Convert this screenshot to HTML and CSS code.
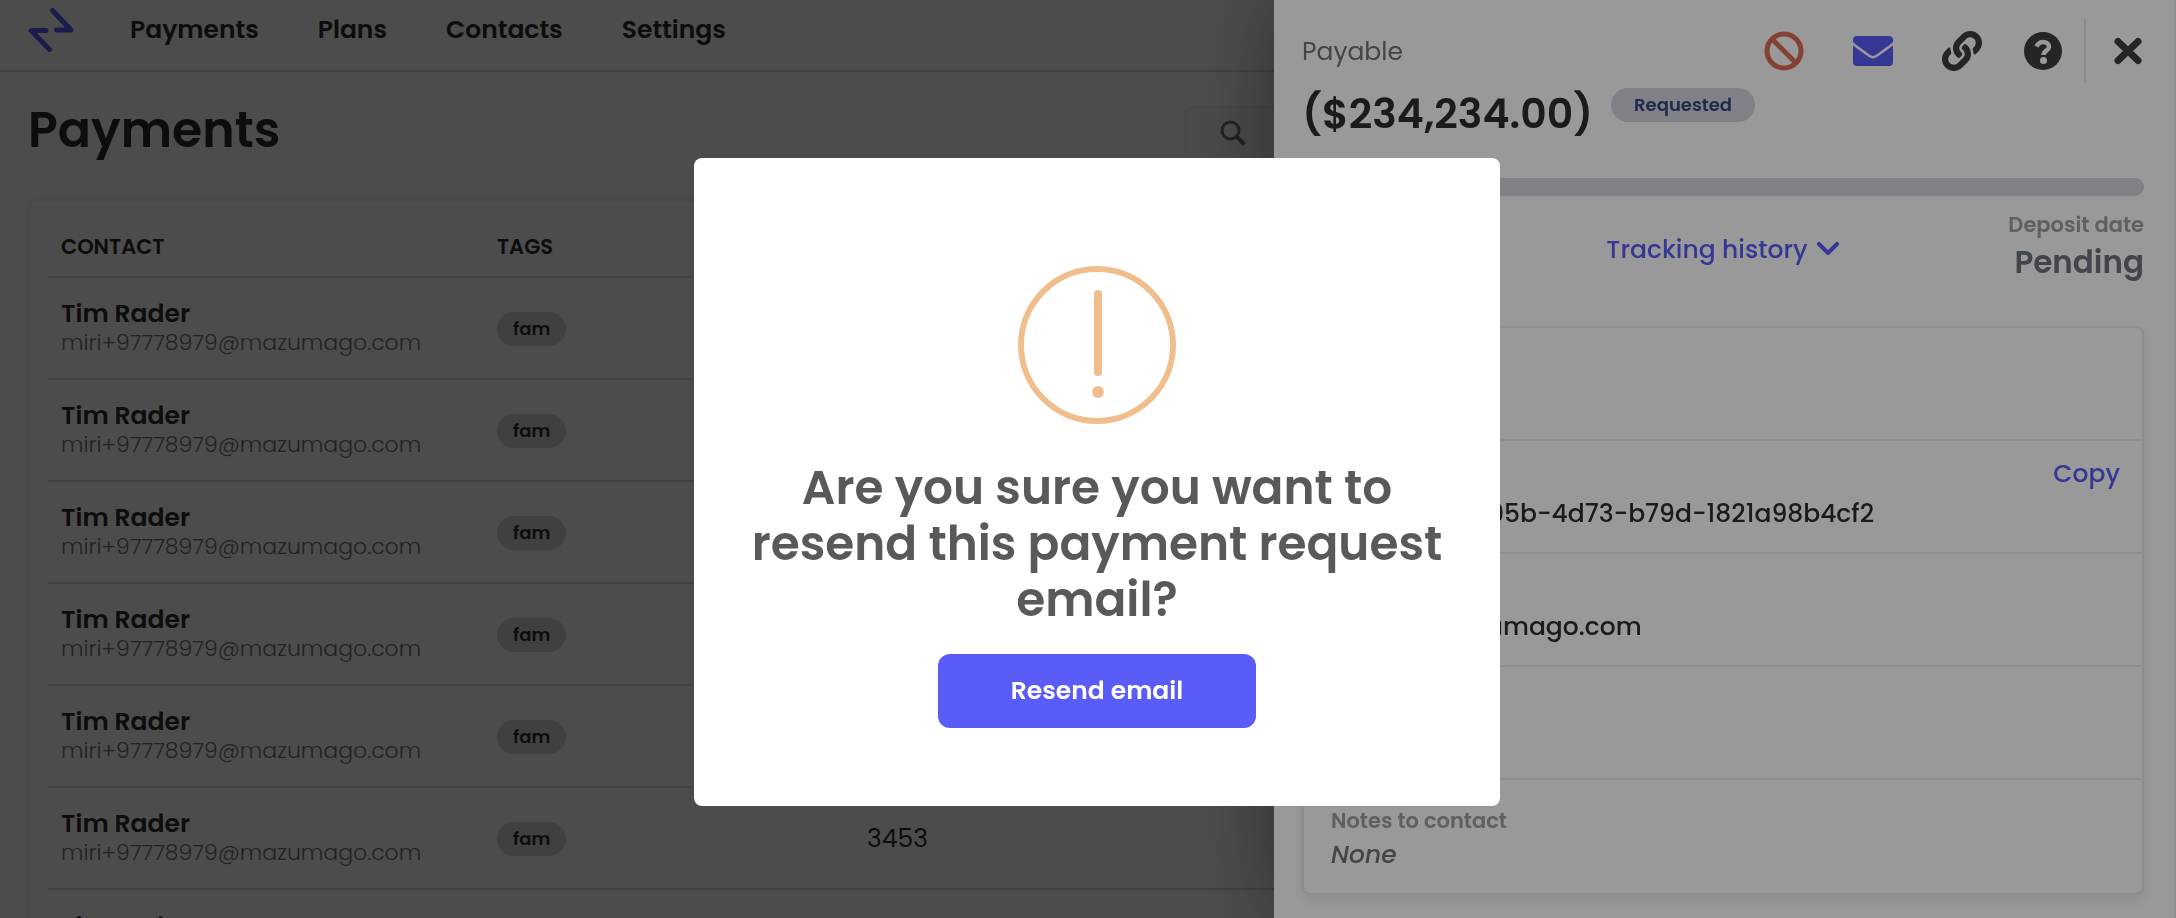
FILE: index.html
```html
<!DOCTYPE html>
<html lang="en">
<head>
    <meta charset="UTF-8" />
    <meta name="viewport" content="width=device-width, initial-scale=1.0"/>
    <title>Payments</title>
    <link rel="stylesheet" href="styles.css">
</head>
<body>
<header class="navbar">
    <a href="#" class="logo" aria-label="Home">
        <svg width="46" height="44" viewBox="0 0 46 44" fill="none" stroke="currentColor" stroke-width="5" stroke-linecap="round" stroke-linejoin="round">
            <path d="M24.500 2.500 L43 22 H28.500" />
            <path d="M21.500 41.500 L3 22.500 H18" />
        </svg>
    </a>
    <nav class="nav-links">
        <a href="#">Payments</a>
        <a href="#">Plans</a>
        <a href="#">Contacts</a>
        <a href="#">Settings</a>
    </nav>
</header>

<main class="page">
    <div class="page-head">
        <h1>Payments</h1>
        <button class="search" aria-label="Search">
            <svg width="26" height="26" viewBox="0 0 26 26" fill="none" stroke="currentColor" stroke-width="3">
                <circle cx="10.500" cy="10.500" r="8.500" />
                <path d="M17 17 L24.500 24.500" stroke-width="4" />
            </svg>
        </button>
    </div>

    <div class="table-card">
        <table class="payments">
            <thead>
                <tr><th class="col-contact">Contact</th><th class="col-tags">Tags</th><th></th></tr>
            </thead>
            <tbody>
                <tr><td><strong>Tim Rader</strong><span class="email">miri+97778979@mazumago.com</span></td><td><span class="tag">fam</span></td><td></td></tr>
                <tr><td><strong>Tim Rader</strong><span class="email">miri+97778979@mazumago.com</span></td><td><span class="tag">fam</span></td><td></td></tr>
                <tr><td><strong>Tim Rader</strong><span class="email">miri+97778979@mazumago.com</span></td><td><span class="tag">fam</span></td><td></td></tr>
                <tr><td><strong>Tim Rader</strong><span class="email">miri+97778979@mazumago.com</span></td><td><span class="tag">fam</span></td><td></td></tr>
                <tr><td><strong>Tim Rader</strong><span class="email">miri+97778979@mazumago.com</span></td><td><span class="tag">fam</span></td><td></td></tr>
                <tr><td><strong>Tim Rader</strong><span class="email">miri+97778979@mazumago.com</span></td><td><span class="tag">fam</span></td><td>3453</td></tr>
                <tr><td><strong>Tim Rader</strong></td><td></td><td></td></tr>
            </tbody>
        </table>
    </div>
</main>

<div class="backdrop"></div>

<!-- Payment details drawer -->
<aside class="drawer">
    <div class="drawer-top">
        <span class="kind">Payable</span>
        <div class="actions">
            <button class="icon-btn danger" aria-label="Cancel payment">
                <svg width="40" height="40" viewBox="0 0 40 40" fill="none" stroke="currentColor" stroke-width="5">
                    <circle cx="20" cy="20" r="17" />
                    <path d="M8 8 L32 32" />
                </svg>
            </button>
            <button class="icon-btn brand" aria-label="Resend email">
                <svg width="40" height="40" viewBox="0 0 512 512" fill="currentColor">
                    <path d="M502.300 190.800c3.900-3.100 9.700-.2 9.700 4.700V400c0 26.500-21.500 48-48 48H48c-26.500 0-48-21.500-48-48V195.600c0-5 5.700-7.800 9.700-4.700 22.400 17.400 52.100 39.500 154.100 113.600 21.100 15.400 56.700 47.800 92.200 47.600 35.700.3 72-32.800 92.300-47.600 102-74.100 131.600-96.300 154-113.700zM256 320c23.200.4 56.600-29.200 73.400-41.400 132.700-96.300 142.800-104.700 173.400-128.700 5.800-4.500 9.200-11.500 9.200-18.900v-19c0-26.500-21.500-48-48-48H48c-26.500 0-48 21.500-48 48v19c0 7.400 3.400 14.300 9.200 18.900 30.600 23.900 40.700 32.400 173.400 128.700 16.800 12.200 50.200 41.800 73.400 41.400z" />
                </svg>
            </button>
            <button class="icon-btn" aria-label="Copy link">
                <svg width="40" height="40" viewBox="0 0 512 512" fill="currentColor">
                    <path d="M326.612 185.391c59.747 59.809 58.927 155.698.36 214.590-.11.12-.24.25-.36.37l-67.200 67.200c-59.270 59.270-155.699 59.262-214.960 0-59.270-59.260-59.270-155.700 0-214.960l37.106-37.106c9.840-9.840 26.786-3.300 27.294 10.606.648 17.722 3.826 35.527 9.690 52.721 1.986 5.822.567 12.262-3.783 16.612l-13.087 13.087c-28.026 28.026-28.905 73.660-1.155 101.960 28.024 28.579 74.086 28.749 102.325.510l67.200-67.190c28.191-28.191 28.073-73.757 0-101.830-3.701-3.694-7.429-6.564-10.341-8.569a16.037 16.037 0 0 1-6.947-12.606c-.396-10.567 3.348-21.456 11.698-29.806l21.054-21.055c5.521-5.521 14.182-6.199 20.584-1.731a152.482 152.482 0 0 1 20.522 17.197zM467.547 44.449c-59.261-59.262-155.690-59.270-214.960 0l-67.200 67.200c-.12.12-.25.25-.36.37-58.566 58.892-59.387 154.781.36 214.590a152.454 152.454 0 0 0 20.521 17.196c6.402 4.468 15.064 3.789 20.584-1.731l21.054-21.055c8.350-8.350 12.094-19.239 11.698-29.806a16.037 16.037 0 0 0-6.947-12.606c-2.912-2.005-6.640-4.875-10.341-8.569-28.073-28.073-28.191-73.639 0-101.830l67.200-67.190c28.239-28.239 74.300-28.069 102.325.510 27.750 28.300 26.872 73.934-1.155 101.960l-13.087 13.087c-4.350 4.350-5.769 10.790-3.783 16.612 5.864 17.194 9.042 34.999 9.690 52.721.509 13.906 17.454 20.446 27.294 10.606l37.106-37.106c59.271-59.259 59.271-155.699.001-214.959z" />
                </svg>
            </button>
            <button class="icon-btn help" aria-label="Help">
                <svg width="38" height="38" viewBox="0 0 38 38">
                    <circle cx="19" cy="19" r="19" fill="currentColor" />
                    <path d="M12.500 14.500 C14 11.500 16 10 19 10 C22.500 10 25 12 25 14.800 C25 18.800 19.500 18.500 19.500 23" fill="none" stroke="#fff" stroke-width="4.500" />
                    <circle cx="19.500" cy="28.500" r="3.500" fill="#fff" />
                </svg>
            </button>
            <button class="icon-btn close" aria-label="Close">
                <svg width="28" height="28" viewBox="0 0 28 28" fill="none" stroke="currentColor" stroke-width="7" stroke-linecap="round">
                    <path d="M4 4.500 L24 23.500 M24 4.500 L4 23.500" />
                </svg>
            </button>
        </div>
    </div>

    <div class="amount">
        <h2>($234,234.00)</h2>
        <span class="status">Requested</span>
    </div>

    <div class="progress"></div>

    <div class="tracking">
        <span></span>
        <button class="link-btn">Tracking history
            <svg width="24" height="16" viewBox="0 0 24 16" fill="none" stroke="currentColor" stroke-width="4" stroke-linecap="round" stroke-linejoin="round">
                <path d="M3 2 L12 11 L21 2" />
            </svg>
        </button>
        <div class="deposit">
            <span class="label">Deposit date</span>
            <strong>Pending</strong>
        </div>
    </div>

    <div class="details">
        <div class="detail"></div>
        <div class="detail">
            <button class="link-btn copy">Copy</button>
            <span>4e0c80d7-a95b-4d73-b79d-1821a98b4cf2</span>
        </div>
        <div class="detail"><span>miri+1@mazumago.com</span></div>
        <div class="detail"></div>
        <div class="detail">
            <span class="label">Notes to contact</span>
            <em>None</em>
        </div>
    </div>
</aside>

<!-- Confirmation dialog -->
<div class="modal-overlay">
    <div class="modal" role="dialog" aria-modal="true" aria-labelledby="modal-title">
        <svg class="modal-icon" width="158" height="158" viewBox="0 0 158 158" fill="none" stroke="currentColor">
            <circle cx="79" cy="79" r="76" stroke-width="6" />
            <path d="M80 28 V106" stroke-width="8" stroke-linecap="round" />
            <circle cx="80" cy="126" r="6" fill="currentColor" stroke="none" />
        </svg>
        <h2 id="modal-title">Are you sure you want to resend this payment request email?</h2>
        <button class="confirm">Resend email</button>
    </div>
</div>
</body>
</html>
```
FILE: styles.css
```css
* {
    box-sizing: border-box;
}

body {
    margin: 0;
    height: 100vh;
    overflow: hidden;
    background: #fff;
    color: #2e2e2e;
    font-family: Poppins, Inter, "Open Sans", sans-serif;
    font-size: 25px;
    line-height: 28px;
}

h1,
h2 {
    margin: 0;
    font-weight: 600;
}

button {
    padding: 0;
    border: 0;
    background: none;
    color: inherit;
    font: inherit;
}

a {
    color: inherit;
    text-decoration: none;
}

svg {
    display: block;
}

/* Page */
.navbar {
    display: flex;
    align-items: center;
    height: 72px;
    padding: 0 28px 10px;
    border-bottom: 2px solid #d9d9d9;
}

.logo {
    color: #595cf7;
}

.nav-links {
    display: flex;
    gap: 59px;
    margin-left: 56px;
    font-weight: 600;
}

.page {
    padding: 0 28px;
}

.page-head {
    display: flex;
    justify-content: space-between;
    height: 128px;
    padding-top: 28px;
}

.page-head h1 {
    font-size: 49px;
    line-height: 60px;
}

.search {
    width: 964px;
    height: 54px;
    margin-top: 6px;
    padding-left: 34px;
    border: 2px solid #f0f0f0;
    border-radius: 8px;
    background: #f8f8f8;
    color: #757575;
}

.table-card {
    padding: 0 18px;
    border: 2px solid #f2f2f2;
    border-radius: 8px;
    box-shadow: 0 0 12px rgba(0, 0, 0, 0.08);
}

.payments {
    width: 100%;
    border-collapse: separate;
    border-spacing: 0;
    table-layout: fixed;
}

.payments th {
    height: 76px;
    padding: 16px 13px 0;
    border-bottom: 2px solid #d9d9d9;
    font-size: 21px;
    font-weight: 600;
    text-align: left;
    text-transform: uppercase;
}

.payments td {
    height: 102px;
    padding: 2px 13px 0;
    border-bottom: 2px solid #d9d9d9;
}

.payments tr:last-child td {
    padding-bottom: 28px;
}

.payments strong,
.email {
    display: block;
    font-weight: 600;
}

.email {
    color: #6c757d;
    font-size: 22px;
    font-weight: 300;
    line-height: 30px;
}

.col-contact {
    width: 436px;
}

.col-tags {
    width: 370px;
}

.tag,
.status {
    display: inline-block;
    padding: 0 16px;
    border-radius: 17px;
    background: #d6d6d6;
    font-size: 18px;
    font-weight: 600;
    line-height: 34px;
}

.backdrop {
    position: fixed;
    inset: 0;
    background: rgba(0, 0, 0, 0.5);
}

/* Drawer */
.drawer {
    position: fixed;
    top: 0;
    right: 0;
    bottom: 0;
    width: 902px;
    padding: 18px 30px 0 28px;
    border-right: 2px solid #f0f0f0;
    background: #fff;
    box-shadow: 0 0 80px rgba(0, 0, 0, 0.4);
}

.drawer-top {
    display: flex;
    align-items: center;
    justify-content: space-between;
    height: 66px;
}

.kind {
    color: #6c757d;
    padding-top: 2px;
}

.actions {
    display: flex;
    align-items: center;
    gap: 49px;
    padding-right: 2px;
}

.icon-btn {
    color: #3f3f3f;
}

.danger {
    color: #dd6b56;
}

.brand,
.link-btn {
    color: #595cf7;
}

.help {
    margin-left: -7px;
}

.close {
    height: 64px;
    margin-left: -27px;
    padding-left: 28px;
    border-left: 2px solid #e6e6e6;
}

.amount {
    display: flex;
    align-items: flex-start;
    gap: 18px;
    padding-top: 4px;
}

.amount h2 {
    font-size: 41px;
    line-height: 52px;
}

.status {
    background: #d6d8e1;
    color: #35467b;
    padding: 0 23px;
}

.progress {
    height: 18px;
    margin-top: 38px;
    border-radius: 9px;
    background: #d6d8e1;
}

.tracking {
    display: grid;
    grid-template-columns: 1fr auto 1fr;
    align-items: center;
    height: 130px;
    padding-bottom: 22px;
}

.link-btn {
    display: flex;
    align-items: center;
    gap: 8px;
    font-weight: 500;
}

.deposit {
    display: flex;
    flex-direction: column;
    gap: 4px;
    padding-bottom: 8px;
    text-align: right;
}

.deposit strong {
    color: #6c757d;
    font-size: 31px;
    font-weight: 600;
    line-height: 38px;
}

.label {
    color: #a0a0a0;
    font-size: 21px;
    font-weight: 600;
}

.details {
    border: 2px solid #ebebeb;
    border-radius: 8px;
    box-shadow: 0 6px 12px rgba(0, 0, 0, 0.08);
}

.detail {
    display: flex;
    flex-direction: column;
    justify-content: flex-end;
    gap: 6px;
    height: 113px;
    padding: 0 22px 24px 27px;
    border-bottom: 2px solid #ebebeb;
    font-weight: 500;
}

.detail:last-child {
    border-bottom: 0;
}

.detail em {
    color: #6c757d;
}

.copy {
    align-self: flex-end;
    line-height: 40px;
}

/* Modal */
.modal-overlay {
    position: fixed;
    inset: 0;
    display: flex;
    align-items: center;
    justify-content: center;
    padding: 46px 0 0 18px;
    background: rgba(0, 0, 0, 0.4);
}

.modal {
    display: flex;
    flex-direction: column;
    align-items: center;
    width: 806px;
    padding: 108px 40px 78px;
    border-radius: 8px;
    background: #fff;
}

.modal-icon {
    color: #f0bd8d;
}

.modal h2 {
    margin: 36px 0 26px;
    color: #595959;
    font-size: 47px;
    line-height: 56px;
    text-align: center;
}

.confirm {
    min-width: 318px;
    height: 74px;
    border-radius: 12px;
    background: #595cf7;
    color: #fff;
    font-weight: 600;
}
```
